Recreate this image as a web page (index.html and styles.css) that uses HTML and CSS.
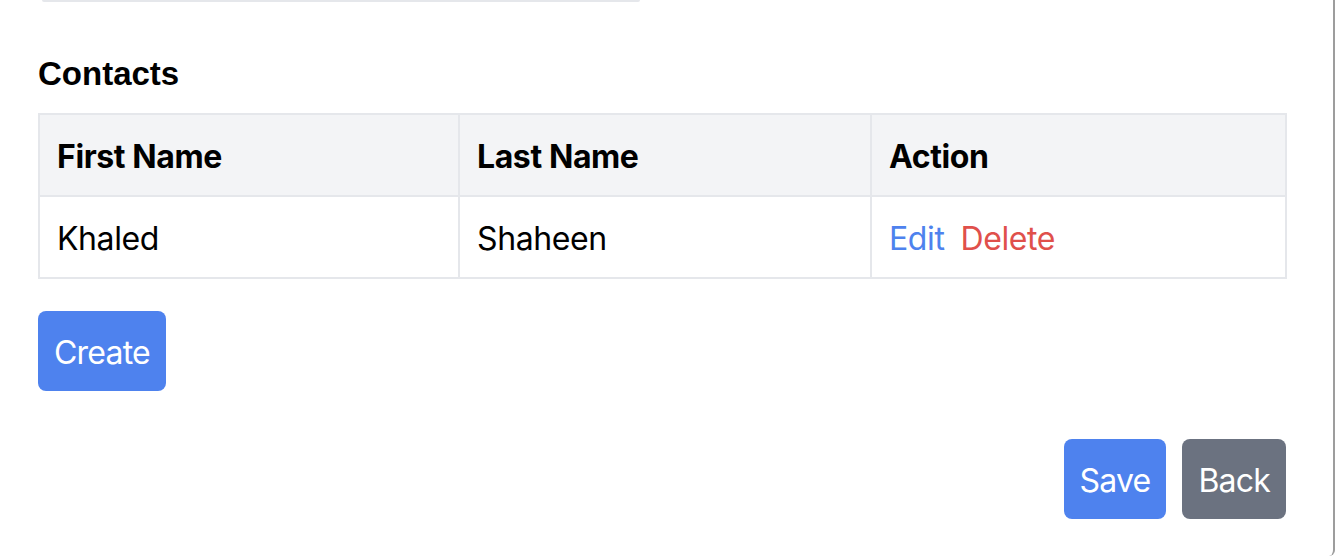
FILE: index.html
```html
<!DOCTYPE html>
<html>
<head>
<meta charset="utf-8">
<link rel="stylesheet" href="styles.css">
</head>
<body>
<div class="page">
  <div class="input-edge"></div>
  <div class="content">
    <h2 class="title">Contacts</h2>
    <table class="contacts">
      <colgroup>
        <col class="c1"><col class="c2"><col class="c3">
      </colgroup>
      <thead>
        <tr><th>First Name</th><th>Last Name</th><th>Action</th></tr>
      </thead>
      <tbody>
        <tr>
          <td>Khaled</td>
          <td>Shaheen</td>
          <td><span class="actions"><a class="edit" href="#">Edit</a><a class="delete" href="#">Delete</a></span></td>
        </tr>
      </tbody>
    </table>
    <div class="create-row"><button class="btn btn-blue">Create</button></div>
    <div class="footer">
      <button class="btn btn-blue btn-save">Save</button>
      <button class="btn btn-gray btn-back">Back</button>
    </div>
  </div>
</div>
</body>
</html>
```
FILE: styles.css
```css
html, body {
  margin: 0;
  padding: 0;
  background: #ffffff;
}
body {
  font-family: Inter, "Noto Sans", sans-serif;
  color: #000;
}
.page {
  width: 1335px;
  height: 556px;
  box-sizing: border-box;
  border-right: 2px solid #9d9d9d;
  border-bottom-right-radius: 6px;
  overflow: hidden;
}
.input-edge {
  margin-left: 42px;
  width: 598px;
  height: 2px;
  background: #e5e7eb;
  border-radius: 0 0 2px 2px;
}
.content {
  margin-left: 38px;
  width: 1248px;
}
.title {
  margin: 52px 0 19px;
  font-family: "Liberation Sans", Arial, sans-serif;
  font-weight: 700;
  font-size: 33px;
  line-height: 40px;
}
.contacts {
  width: 1247px;
  border-collapse: collapse;
  table-layout: fixed;
}
.c1 { width: 420px; }
.c2 { width: 412px; }
.c3 { width: 415px; }
.contacts th, .contacts td {
  border: 2px solid #e5e7eb;
  padding: 22px 17px 18px;
  height: 40px;
  font-size: 32px;
  line-height: 40px;
  letter-spacing: -0.4px;
  text-align: left;
  vertical-align: middle;
  white-space: nowrap;
}
.contacts th {
  background: #f3f4f6;
  font-weight: 700;
}
.contacts td {
  font-weight: 400;
}
.actions {
  display: inline-flex;
  gap: 16px;
}
.edit, .delete {
  text-decoration: none;
}
.edit { color: #4e82ee; }
.delete { color: #e0504b; }
.create-row {
  margin-top: 32px;
  display: flex;
}
.btn {
  font-family: Inter, "Noto Sans", sans-serif;
  font-size: 32px;
  line-height: 40px;
  letter-spacing: -0.8px;
  height: 80px;
  padding: 3px 16px 0;
  border: none;
  border-radius: 8px;
  color: #fff;
  cursor: pointer;
}
.btn-blue { background: #4e82ee; }
.btn-gray { background: #6b7280; }
.footer {
  margin-top: 48px;
  display: flex;
  justify-content: flex-end;
  gap: 16px;
}
```
